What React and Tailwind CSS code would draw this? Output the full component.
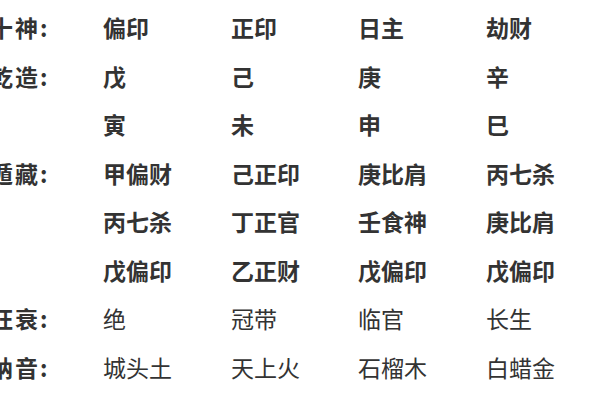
import React from "react";

const rows = [
	{ label: "十神:", cells: ["偏印", "正印", "日主", "劫财"], bold: true },
	{ label: "乾造:", cells: ["戊", "己", "庚", "辛"], bold: true },
	{ label: "", cells: ["寅", "未", "申", "巳"], bold: true },
	{ label: "遁藏:", cells: ["甲偏财", "己正印", "庚比肩", "丙七杀"], bold: true },
	{ label: "", cells: ["丙七杀", "丁正官", "壬食神", "庚比肩"], bold: true },
	{ label: "", cells: ["戊偏印", "乙正财", "戊偏印", "戊偏印"], bold: true },
	{ label: "旺衰:", cells: ["绝", "冠带", "临官", "长生"], bold: false },
	{ label: "纳音:", cells: ["城头土", "天上火", "石榴木", "白蜡金"], bold: false },
];

const App = () => {
	return (
		<div className="h-[400px] w-[600px] overflow-hidden bg-white pt-[3px] font-['Noto_Sans_CJK_SC',sans-serif] text-[23px] text-[#333333]">
			<div className="ml-[-13px]">
				{rows.map((row, i) => (
					<div
						key={i}
						className="grid h-[48.5px] grid-cols-[116px_128px_127px_128px_128px] items-center whitespace-nowrap"
					>
						<span className="pl-[3px] font-bold tracking-[2px]">{row.label}</span>
						{row.cells.map((c, j) => (
							<span key={j} className={row.bold ? "font-bold" : "font-normal"}>
								{c}
							</span>
						))}
					</div>
				))}
			</div>
		</div>
	);
};

export default App;
